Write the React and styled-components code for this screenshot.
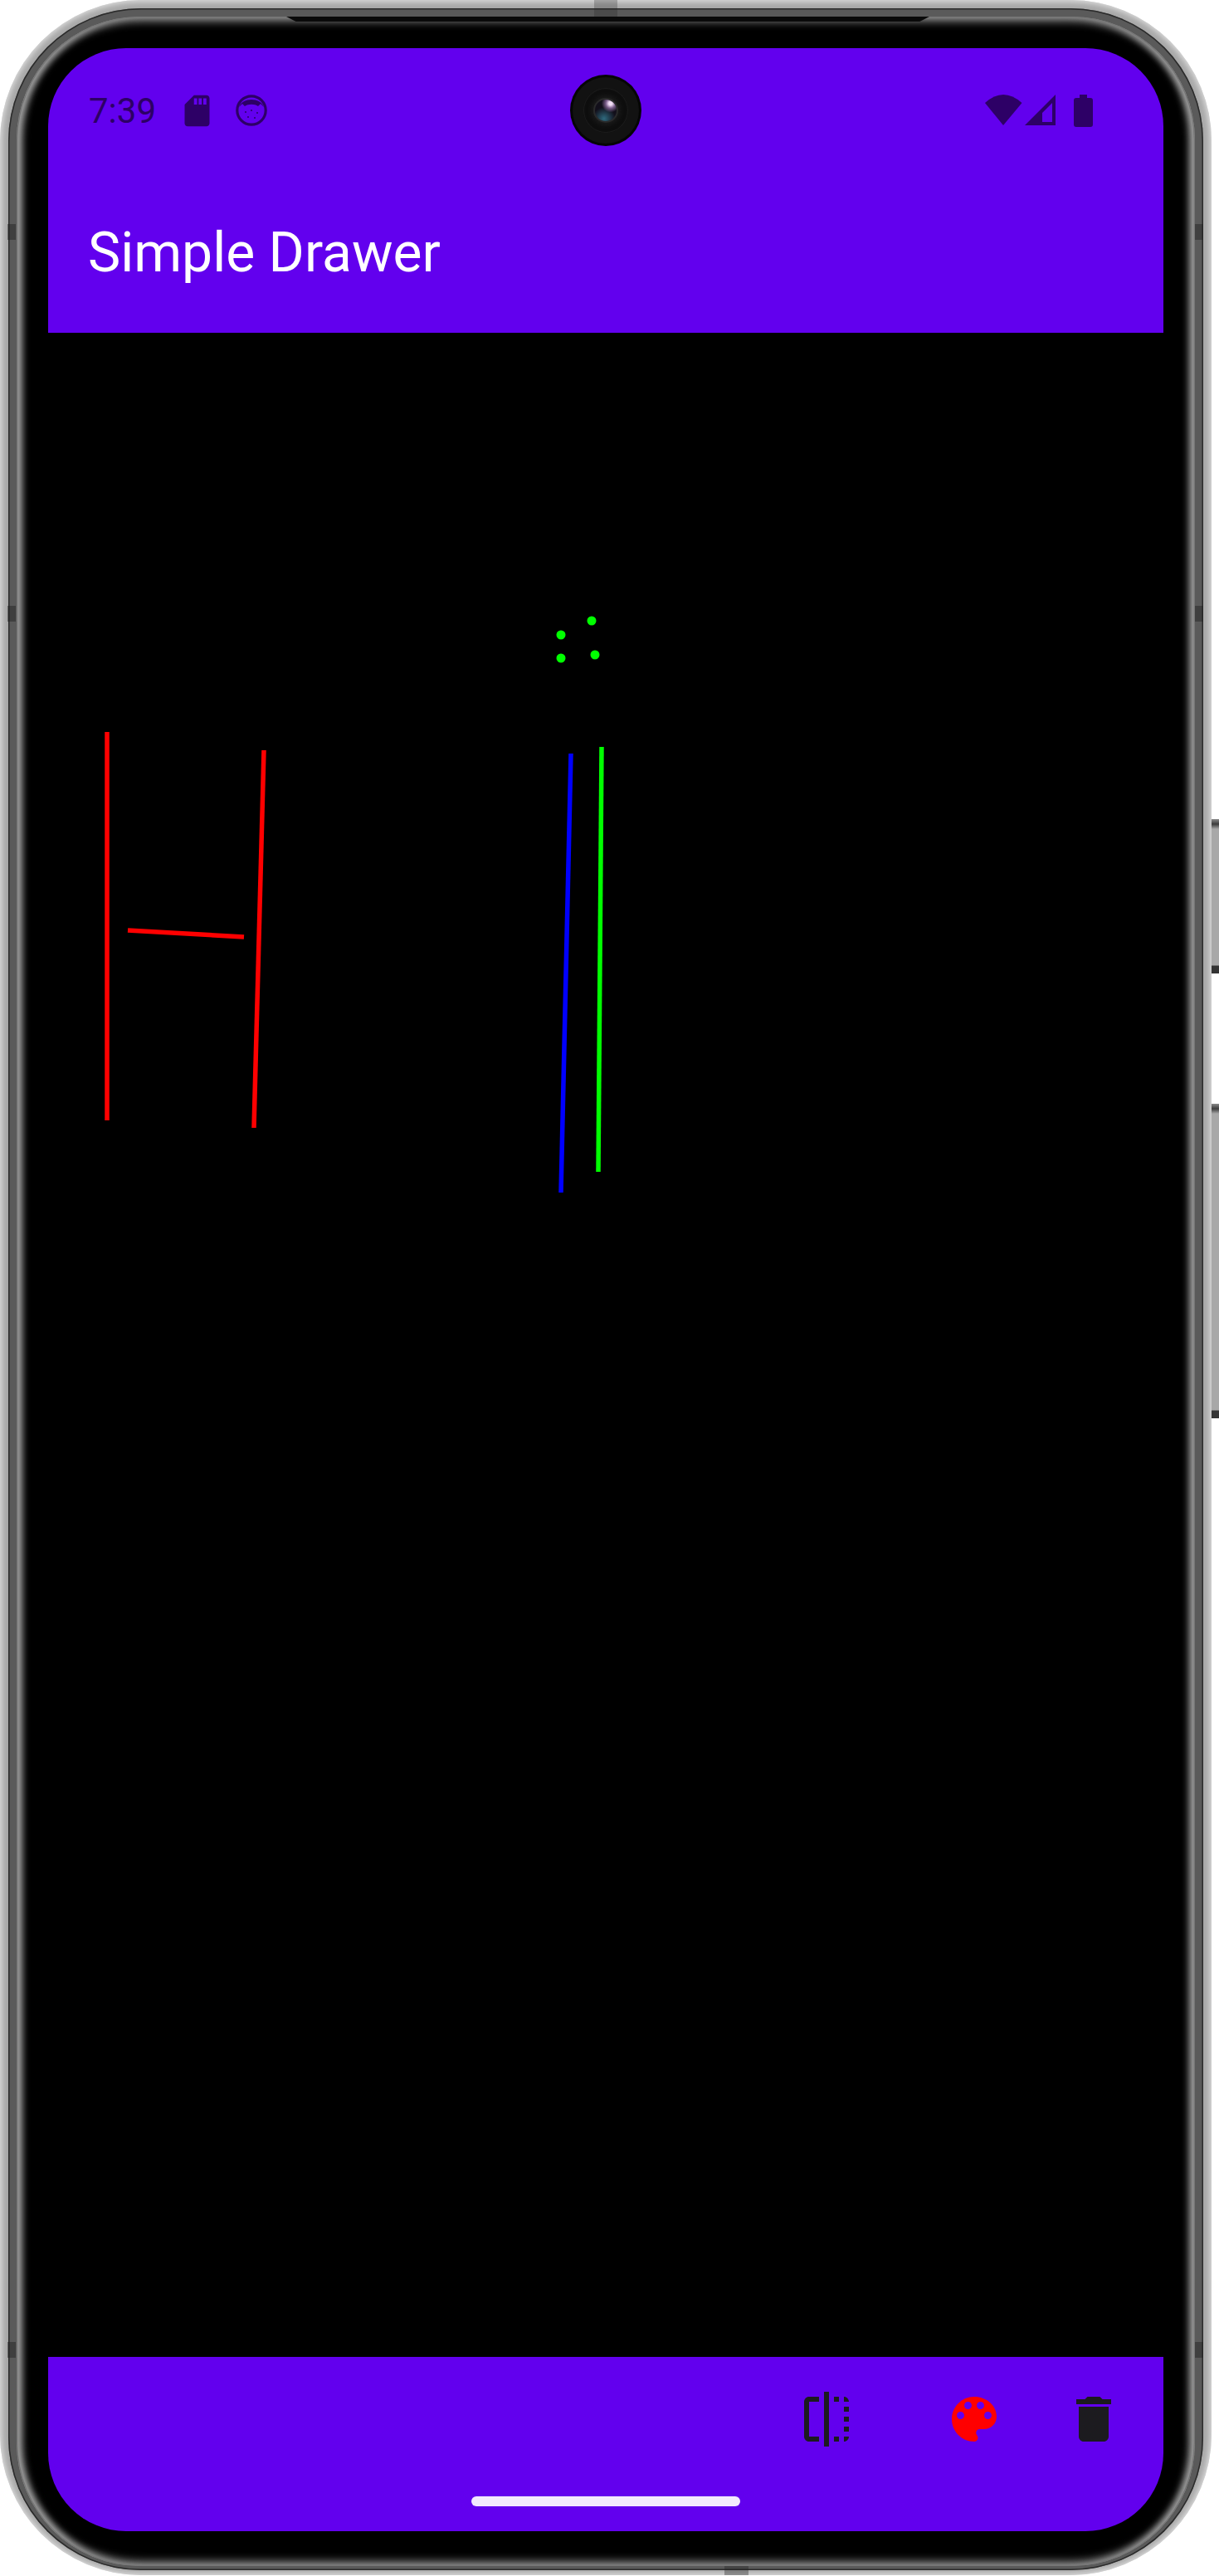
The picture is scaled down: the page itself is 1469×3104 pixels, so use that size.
import React from "react";
import styled, { createGlobalStyle } from "styled-components";

const Global = createGlobalStyle`
  html, body { margin: 0; padding: 0; background: #fff; }
  body { font-family: Roboto, "Liberation Sans", sans-serif; }
`;

const Page = styled.div`
  width: 1469px;
  height: 3104px;
  overflow: hidden;
  background: #fff;
`;

const Device = styled.div`
  position: relative;
  box-sizing: border-box;
  width: 1460px;
  height: 3103px;
  padding: 10px 10px 6px;
  border-radius: 170px;
  background: #a8a8a8;
  box-shadow: inset 0 0 7px 2px rgba(255, 255, 255, 0.65);
`;

const MidRing = styled.div`
  box-sizing: border-box;
  height: 100%;
  padding: 10px 10px 5px;
  border-radius: 160px;
  background: #5a5a5a;
  box-shadow: inset 0 0 0 1.5px #2b2b2b;
`;

const InnerRing = styled.div`
  box-sizing: border-box;
  height: 100%;
  padding: 38px 38px 42px;
  border-radius: 148px;
  background: #000;
  box-shadow:
    inset 0 0 0 1.5px #777,
    inset 9px 0 8px -2px #a2a2a2,
    inset -9px 0 8px -2px #a2a2a2,
    inset 0 10px 10px -3px #6a6a6a,
    inset 0 -10px 10px -3px #6a6a6a;
`;

const Screen = styled.div`
  display: flex;
  flex-direction: column;
  height: 100%;
  border-radius: 94px;
  overflow: hidden;
  background: #000;
`;

const AppBar = styled.header`
  height: 343px;
  flex: none;
  background: #6200ee;
`;

const StatusBar = styled.div`
  display: grid;
  grid-template-columns: 1fr auto 1fr;
  align-items: center;
  height: 150px;
  padding: 0 49px;
  box-sizing: border-box;
`;

const StatusLeft = styled.div`
  display: flex;
  align-items: center;
`;

const Clock = styled.span`
  font-size: 42px;
  line-height: 50px;
  padding-top: 2px;
  color: #2d0066;
  width: 107.5px;
`;

const Glyph = styled.svg`
  display: block;
  flex: none;
  fill: #2d0066;
  margin-left: ${(p) => p.$gap || 0}px;
`;

const StatusRight = styled.div`
  display: flex;
  justify-content: flex-end;
  padding-right: 35px;
`;

const Camera = styled.div`
  position: relative;
  width: 86px;
  height: 86px;
  border-radius: 50%;
  background: #050505;
  display: flex;
  align-items: center;
  justify-content: center;
  &::before {
    content: "";
    position: absolute;
    inset: 3px;
    border-radius: 50%;
    background: #121212;
  }
`;

const CameraRing = styled.div`
  position: relative;
  width: 54px;
  height: 54px;
  border-radius: 50%;
  background: #0e0e0e;
  box-shadow: inset 0 0 0 1px #1c1c1c;
  display: flex;
  align-items: center;
  justify-content: center;
`;

const Lens = styled.div`
  width: 26px;
  height: 26px;
  border-radius: 50%;
  background:
    radial-gradient(circle at 72% 18%, #f0dcf5 0 7%, #7a5d8a 20%, transparent 38%),
    radial-gradient(circle at 42% 88%, #2f6a7e 0, transparent 50%),
    #120f1a;
  box-shadow: 0 0 0 2px #2a2a2a, 0 0 5px 5px #1a1a1a;
`;

const Title = styled.h1`
  margin: 58px 0 0;
  padding-left: 48px;
  font-size: 66px;
  line-height: 78px;
  font-weight: 400;
  color: #fff;
`;

const Canvas = styled.main`
  flex: 1;
  background: #000;
`;

const Sketch = styled.svg`
  display: block;
  width: 100%;
  height: 100%;
`;

const BottomBar = styled.footer`
  height: 210px;
  flex: none;
  display: flex;
  flex-direction: column;
  background: #6200ee;
`;

const Toolbar = styled.div`
  display: flex;
  justify-content: flex-end;
  gap: 72px;
  padding: 39px 48px 0 0;
`;

const ToolIcon = styled.svg`
  display: block;
  width: 72px;
  height: 72px;
  fill: ${(p) => p.$color || "#1c1b1f"};
  margin-right: ${(p) => p.$after || 0}px;
`;

const Handle = styled.div`
  width: 324px;
  height: 12px;
  border-radius: 6px;
  background: #f3e9fe;
  margin: auto auto 30px;
`;

const SideKey = styled.div`
  position: absolute;
  left: 1460px;
  top: ${(p) => p.$top}px;
  width: 9px;
  height: ${(p) => p.$height}px;
  background: linear-gradient(#8a8a8a 0, #3c3c3c 6px, #a8a8a8 12px, #a8a8a8 calc(100% - 10px), #333 calc(100% - 9px));
`;

const Band = styled.div`
  position: absolute;
  background: rgba(30, 30, 30, ${(p) => p.$alpha});
  left: ${(p) => p.$x}px;
  top: ${(p) => p.$y}px;
  width: ${(p) => p.$w}px;
  height: ${(p) => p.$h}px;
`;

const TopNotch = styled.div`
  position: absolute;
  left: 345px;
  top: 20px;
  width: 775px;
  height: 6px;
  background: #0a0a0a;
  clip-path: polygon(0 0, 100% 0, 98.5% 100%, 1.5% 100%);
`;

const strokes = [
  { c: "#ff0000", x1: 129, y1: 882, x2: 129, y2: 1350 },
  { c: "#ff0000", x1: 318, y1: 904, x2: 306, y2: 1359 },
  { c: "#ff0000", x1: 154, y1: 1121, x2: 294, y2: 1129 },
  { c: "#0000ff", x1: 688, y1: 908, x2: 676, y2: 1437 },
  { c: "#00ff00", x1: 725, y1: 900, x2: 721, y2: 1412 },
];
const dots = [
  [713, 748],
  [676, 765],
  [676, 793],
  [717, 789],
];

export default function App() {
  return (
    <Page>
      <Global />
      <Device>
        <SideKey $top={987} $height={186} />
        <SideKey $top={1330} $height={379} />
        <MidRing>
          <InnerRing>
            <Screen>
              <AppBar>
                <StatusBar>
                  <StatusLeft>
                    <Clock>7:39</Clock>
                    <Glyph width="45" height="45" viewBox="0 0 24 24">
                      <path d="M18 2h-8L4.02 8 4 20c0 1.1.9 2 2 2h12c1.1 0 2-.9 2-2V4c0-1.1-.9-2-2-2zm-6 6h-2V4h2v4zm3 0h-2V4h2v4zm3 0h-2V4h2v4z" />
                    </Glyph>
                    <Glyph width="38" height="38" viewBox="0 0 38 38" $gap={24}>
                      <circle cx="19" cy="19" r="17.2" fill="none" stroke="#2d0066" strokeWidth="3.2" />
                      <path d="M4 15 C8 3 30 3 34 15 L30 11 L27 14 C23 11 15 11 11 14 L8 11 Z" />
                      <circle cx="12" cy="21" r="1" />
                      <circle cx="19" cy="19" r="1" />
                      <circle cx="26" cy="22" r="1" />
                      <circle cx="15" cy="27" r="1" />
                      <circle cx="23" cy="28" r="1" />
                    </Glyph>
                  </StatusLeft>
                  <Camera>
                    <CameraRing>
                      <Lens />
                    </CameraRing>
                  </Camera>
                  <StatusRight>
                    <Glyph width="132" height="40" viewBox="0 0 132 40">
                      <path d="M1 11 Q23 -9 45.5 11 L23 38 Z" />
                      <path fillRule="evenodd" d="M49 38 L86 1 V38 Z M70 23 V34 H82 V11 Z" />
                      <path d="M115 1 h9 v4 h4 a3 3 0 0 1 3 3 v29 a3 3 0 0 1 -3 3 h-17 a3 3 0 0 1 -3 -3 v-29 a3 3 0 0 1 3 -3 h4 z" />
                    </Glyph>
                  </StatusRight>
                </StatusBar>
                <Title>Simple Drawer</Title>
              </AppBar>
              <Canvas>
                <Sketch viewBox="58 401 1344 2439" preserveAspectRatio="none">
                  {strokes.map((s, i) => (
                    <line key={i} x1={s.x1} y1={s.y1} x2={s.x2} y2={s.y2} stroke={s.c} strokeWidth="5.5" />
                  ))}
                  {dots.map(([cx, cy], i) => (
                    <circle key={i} cx={cx} cy={cy} r="5.5" fill="#00ff00" />
                  ))}
                </Sketch>
              </Canvas>
              <BottomBar>
                <Toolbar>
                  <ToolIcon viewBox="0 0 24 24" $after={34}>
                    <path d="M15 21h2v-2h-2v2zm4-12h2V7h-2v2zM3 5v14c0 1.1.9 2 2 2h4v-2H5V5h4V3H5c-1.1 0-2 .9-2 2zm16-2v2h2c0-1.1-.9-2-2-2zm-8 20h2V1h-2v22zm8-6h2v-2h-2v2zM15 5h2V3h-2v2zm4 8h2v-2h-2v2zm0 8c1.1 0 2-.9 2-2h-2v2z" />
                  </ToolIcon>
                  <ToolIcon viewBox="0 0 24 24" $color="#ff0000">
                    <path d="M12 3c-4.97 0-9 4.03-9 9s4.03 9 9 9c.83 0 1.5-.67 1.5-1.5 0-.39-.15-.74-.39-1.01-.23-.26-.38-.61-.38-.99 0-.83.67-1.5 1.5-1.5H16c2.76 0 5-2.24 5-5 0-4.42-4.03-8-9-8zm-5.5 9c-.83 0-1.5-.67-1.5-1.5S5.67 9 6.5 9 8 9.67 8 10.5 7.33 12 6.5 12zm3-4C8.67 8 8 7.33 8 6.5S8.67 5 9.5 5s1.5.67 1.5 1.5S10.33 8 9.5 8zm5 0c-.83 0-1.5-.67-1.5-1.5S13.67 5 14.5 5s1.5.67 1.5 1.5S15.33 8 14.5 8zm3 4c-.83 0-1.5-.67-1.5-1.5S16.67 9 17.5 9s1.5.67 1.5 1.5-.67 1.5-1.5 1.5z" />
                  </ToolIcon>
                  <ToolIcon viewBox="0 0 24 24">
                    <path d="M6 19c0 1.1.9 2 2 2h8c1.1 0 2-.9 2-2V7H6v12zM19 4h-3.5l-1-1h-5l-1 1H5v2h14V4z" />
                  </ToolIcon>
                </Toolbar>
                <Handle />
              </BottomBar>
            </Screen>
          </InnerRing>
        </MidRing>
        <TopNotch />
        <Band $alpha={0.25} $x={716} $y={0} $w={28} $h={20} />
        <Band $alpha={0.35} $x={873} $y={3092} $w={29} $h={11} />
        {[270, 730, 2822].map((y) => (
          <React.Fragment key={y}>
            <Band $alpha={0.45} $x={9} $y={y} $w={10} $h={19} />
            <Band $alpha={0.45} $x={1440} $y={y} $w={10} $h={19} />
          </React.Fragment>
        ))}
      </Device>
    </Page>
  );
}
